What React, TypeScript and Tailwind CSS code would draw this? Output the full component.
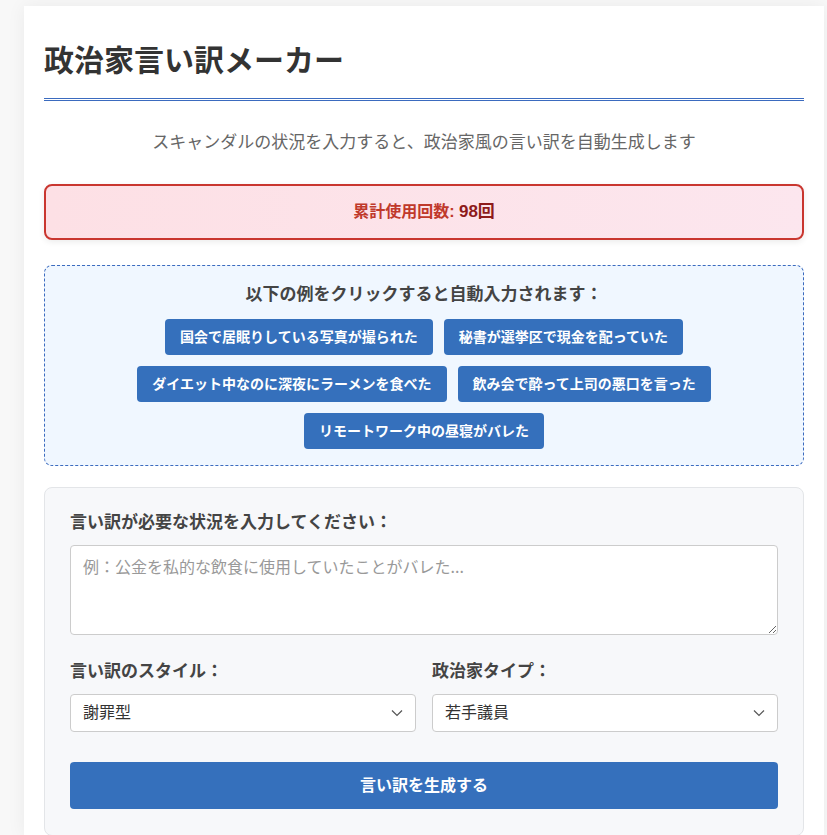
import { useState } from "react";

const examples = [
  "国会で居眠りしている写真が撮られた",
  "秘書が選挙区で現金を配っていた",
  "ダイエット中なのに深夜にラーメンを食べた",
  "飲み会で酔って上司の悪口を言った",
  "リモートワーク中の昼寝がバレた",
];

function Chevron() {
  return (
    <svg
      className="pointer-events-none absolute right-[12px] top-1/2 -translate-y-1/2"
      width="14"
      height="14"
      viewBox="0 0 14 14"
      fill="none"
      stroke="#555"
      strokeWidth="1.2"
    >
      <path d="M2 4.5 L7 9.5 L12 4.5" />
    </svg>
  );
}

export default function App() {
  const [situation, setSituation] = useState("");
  const [style, setStyle] = useState("謝罪型");
  const [type, setType] = useState("若手議員");

  return (
    <div
      className="min-h-screen bg-[#f8f8f8] pt-[6px] pl-[24px]"
      style={{ fontFamily: '"Liberation Sans", "Noto Sans CJK JP", sans-serif' }}
    >
      <div className="w-[800px] bg-white px-5 pt-[32px] shadow-[0_0_18px_rgba(0,0,0,0.06)]">
        <h1 className="border-b-[3px] border-double border-[#3b6bbf] pb-[15px] text-[30px] leading-[45px] font-bold text-[#333]">
          政治家言い訳メーカー
        </h1>

        <p className="mt-[28px] mb-[28px] text-center text-[17px] leading-[27px] text-[#666]">
          スキャンダルの状況を入力すると、政治家風の言い訳を自動生成します
        </p>

        <div className="rounded-lg border-2 border-[#c9362f] bg-gradient-to-r from-[#fde0e5] to-[#fce6ee] py-[14px] text-center text-[16px] leading-[24px] font-bold text-[#c0392b] shadow-[0_2px_6px_rgba(0,0,0,0.08)]">
          累計使用回数: <span className="text-[17px] text-[#8e1b1b]">98回</span>
        </div>

        <div className="mt-[25px] rounded-lg border border-dashed border-[#3b6bbf] bg-[#f0f7ff] px-4 pt-[17px] pb-[16px]">
          <p className="text-center text-[17px] leading-[24px] font-bold text-[#444]">
            以下の例をクリックすると自動入力されます：
          </p>
          <div className="mt-[12px] flex flex-wrap justify-center gap-x-[11px] gap-y-[11px]">
            {examples.map((ex) => (
              <button
                key={ex}
                onClick={() => setSituation(ex)}
                className="h-[36px] rounded-[4px] bg-[#3570bc] px-[15px] text-[14px] font-bold text-white"
              >
                {ex}
              </button>
            ))}
          </div>
        </div>

        <div className="mt-[21px] rounded-lg border border-[#e3e5e8] bg-[#f7f8fa] px-[25px] pt-[23px] pb-[26px]">
          <label className="block text-[17px] leading-[24px] font-bold text-[#444]">
            言い訳が必要な状況を入力してください：
          </label>
          <textarea
            value={situation}
            onChange={(e) => setSituation(e.target.value)}
            placeholder="例：公金を私的な飲食に使用していたことがバレた..."
            className="mt-[10px] block h-[90px] w-full rounded-[4px] border border-[#ccc] bg-white px-[12px] py-[8px] text-[16px] leading-[24px] text-[#333] placeholder:text-[#999]"
            style={{ fontFamily: '"Noto Sans CJK JP", sans-serif' }}
          />

          <div className="mt-[25px] grid grid-cols-2 gap-4">
            <div>
              <label className="block text-[17px] leading-[24px] font-bold text-[#444]">
                言い訳のスタイル：
              </label>
              <div className="relative mt-[10px]">
                <select
                  value={style}
                  onChange={(e) => setStyle(e.target.value)}
                  className="block h-[38px] w-full appearance-none rounded-[4px] border border-[#ccc] bg-white px-[12px] text-[16px] text-[#333]"
                >
                  <option>謝罪型</option>
                  <option>責任転嫁型</option>
                  <option>記憶喪失型</option>
                  <option>論点すり替え型</option>
                </select>
                <Chevron />
              </div>
            </div>
            <div>
              <label className="block text-[17px] leading-[24px] font-bold text-[#444]">
                政治家タイプ：
              </label>
              <div className="relative mt-[10px]">
                <select
                  value={type}
                  onChange={(e) => setType(e.target.value)}
                  className="block h-[38px] w-full appearance-none rounded-[4px] border border-[#ccc] bg-white px-[12px] text-[16px] text-[#333]"
                >
                  <option>若手議員</option>
                  <option>ベテラン議員</option>
                  <option>大臣</option>
                  <option>首相</option>
                </select>
                <Chevron />
              </div>
            </div>
          </div>

          <button className="mt-[30px] h-[47px] w-full rounded-[4px] bg-[#3570bc] text-[16px] font-bold text-white">
            言い訳を生成する
          </button>
        </div>
      </div>
    </div>
  );
}
